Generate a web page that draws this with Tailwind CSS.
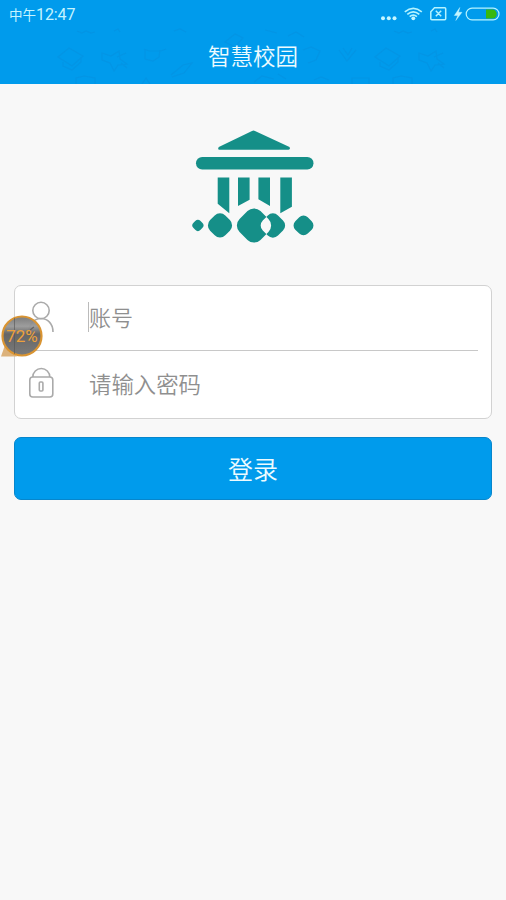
<!DOCTYPE html>
<html lang="zh-CN">
<head>
<meta charset="utf-8">
<title>智慧校园</title>
<script src="https://cdn.jsdelivr.net/npm/@tailwindcss/browser@4"></script>
</head>
<body class="relative h-[900px] w-[506px] overflow-hidden bg-[#f8f8f8] font-['Noto_Sans_CJK_SC',sans-serif]">
<header class="relative flex h-[84px] flex-col bg-[#009bec] text-[#edfbff]">
  <svg class="absolute inset-0" width="506" height="84" viewBox="0 0 506 84" fill="none" stroke="#078bd7" stroke-opacity=".36" stroke-width="1.2">
    <defs>
      <g id="doodles">
        <path d="M58 57l11-9 14 8-11 10zM63 62v4l9 4 9-8v-4M77 31l5 2 4-2 5 2 4-1M114 31l4-2 2 3M102 53l9 3 8-5 1 8 7 5-9 1-4 6-4-8-8-3zM117 57l9-4M121 63l6 5M76 84v-6l8-2 11 2v6"/>
      </g>
    </defs>
    <use href="#doodles"/>
    <use href="#doodles" x="317"/>
    <path d="M144 49l5 2h12l5-2M145 49v10l8 2 6-4 1-7M142 84l4-6 4 6M171 75l12-10 9-2-8 10-12 4M174 31l6-2 6 3M225 42l10-8 8 4-8 9zM265 30l12 3M288 36l8-4 8 5M303 50l8-3 9 4-4 9-8 3M339 50l8 11 9-11M343 48l5 7 4-7M254 82l8-6 12 3M278 74l8 5M314 80l7-3 8 3M352 84v-6h17v6"/>
  </svg>
  <div class="relative flex h-7 items-center justify-between pl-[9px] pr-[6px]">
    <span class="mt-[1px] text-[13.5px] leading-5 text-[#c5f4ff]">中午<span class="font-[Roboto] text-[16px] tracking-[-0.1px]">12:47</span></span>
    <svg width="122" height="28" viewBox="378 0 122 28" fill="none" stroke="#b5f3ff" stroke-width="1.5">
      <g fill="#c5f6ff" stroke="none"><circle cx="383" cy="18.2" r="2"/><circle cx="388.8" cy="18.2" r="2"/><circle cx="394.5" cy="18.2" r="2"/><circle cx="413.3" cy="18.3" r="1.9"/></g>
      <path d="M404.8 11.8q8.5-7 17 0M407.3 14.3q6-5 12 0M409.7 16.7q3.6-3 7.2 0" stroke-width="1.7"/>
      <path d="M434.5 7.8h10.2q1 0 1 1v9.9q0 1-1 1h-12.9q-1 0-1-1v-7zM435.8 10.8l5.4 5.4M441.2 10.8l-5.4 5.4"/>
      <path d="M459.8 7.5l-5.5 8h3.5l-2 5 6.2-8.2h-3.5z" fill="#c5f6ff" stroke="#c5f6ff" stroke-width=".4"/>
      <rect x="466.2" y="8.2" width="32.8" height="11.6" rx="5.8" stroke-width="1.2"/>
      <path d="M486 9.5h6.2a4.5 4.5 0 0 1 0 9H486z" fill="#38b80e" stroke="none"/>
    </svg>
  </div>
  <h1 class="relative flex h-14 items-center justify-center pb-px text-[22.5px] font-[350] leading-none">智慧校园</h1>
</header>

<main class="px-[14px]">
  <div class="flex h-[201px] justify-center pt-[36px]">
    <svg width="146" height="130" viewBox="180 120 146 130" fill="#158f88">
      <defs><clipPath id="orb"><rect x="239.2" y="210.7" width="29.6" height="29.6" rx="9.2" transform="rotate(45 254 225.5)"/></clipPath></defs>
      <path d="M252 130.9q1.5-.8 3 0l34.5 16q1.3 2.8-1 2.8h-69q-2.3 0-.7-2.8z"/>
      <rect x="196" y="157" width="117.5" height="12.5" rx="6.2"/>
      <path d="M217.7 177.5h11.6v35.7l-11.6-9.4zM238 177.5h11.6v22.3l-11.6 6.3zM258.4 177.5H270v28.6l-11.6-6.8zM280.3 177.5h11.6v29.3l-11.6 6.4z"/>
      <rect x="192.9" y="220.4" width="10" height="10" rx="3.8" transform="rotate(45 197.9 225.4)"/>
      <rect x="209.25" y="214.65" width="21.5" height="21.5" rx="7.5" transform="rotate(45 220 225.4)"/>
      <rect x="239.2" y="210.7" width="29.6" height="29.6" rx="9.2" transform="rotate(45 254 225.5)"/>
      <rect x="262.15" y="214.75" width="21.5" height="21.5" rx="7.2" transform="rotate(45 272.9 225.5)"/>
      <g clip-path="url(#orb)"><rect x="262.15" y="214.75" width="21.5" height="21.5" rx="7.2" transform="rotate(45 272.9 225.5)" fill="#f8f8f8"/></g>
      <rect x="294.7" y="216.6" width="17.6" height="17.6" rx="6" transform="rotate(45 303.5 225.4)"/>
    </svg>
  </div>

  <form>
    <div class="h-[134px] rounded-[7px] border-[1.5px] border-[#d2d2d2] bg-white px-[13px] text-[22px] font-[350] text-[#8f8f8f]">
      <label class="flex h-[65px] items-center border-b border-[#c8c8c8]">
        <svg width="30" height="34" viewBox="0 0 30 34" fill="none" stroke="#aaa" stroke-width="1.6"><circle cx="13" cy="9.5" r="8.2"/><path d="M1 31C1 13 25 13 25 31"/></svg>
        <span class="mb-[2px] ml-[30px] h-[30px] w-px bg-[#bbb]"></span>
        <span class="mb-1 leading-[30px]">账号</span>
      </label>
      <label class="flex h-[66px] items-center pb-[2px]">
        <svg width="30" height="34" viewBox="0 0 30 34" fill="none" stroke="#aaa" stroke-width="1.6"><rect x="1.8" y="11" width="23" height="20" rx="3"/><path d="M4.8 11a8.5 8.5 0 0 1 17 0"/><rect x="11.3" y="16" width="3.6" height="9" rx="1"/></svg>
        <span class="mb-px ml-[31px] text-[22.4px] leading-[30px]">请输入密码</span>
      </label>
    </div>
    <button type="button" class="mt-[18px] flex h-[63px] w-full items-center justify-center rounded-[7px] border border-[#0786cc] bg-[#009bec] text-[25px] font-[350] leading-none text-[#edfbff]">登录</button>
  </form>
</main>

<div class="absolute left-0 top-[314px] h-[44px] w-[44px]">
  <svg width="44" height="44" viewBox="0 0 44 44">
    <defs><linearGradient id="bubble" x1="0" y1="0" x2="0" y2="1"><stop offset="0" stop-color="#777"/><stop offset=".25" stop-color="#999"/><stop offset=".45" stop-color="#606060"/><stop offset="1" stop-color="#757575"/></linearGradient></defs>
    <path d="M5 31L1 42.5h16z" fill="#dcb27b"/>
    <circle cx="22" cy="22" r="19.5" fill="url(#bubble)" fill-opacity=".96" stroke="#d99432" stroke-width="2.2"/>
    <path d="M14.5 4v36" stroke="#555" stroke-opacity=".6"/>
    <path d="M29 19q1-4 5-6" fill="none" stroke="#444" stroke-opacity=".6" stroke-width="1.3"/>
  </svg>
  <span class="absolute inset-0 flex items-center justify-center pt-[2px] font-[Roboto] text-[17px] text-[#eda13b]">72%</span>
</div>
</body>
</html>
